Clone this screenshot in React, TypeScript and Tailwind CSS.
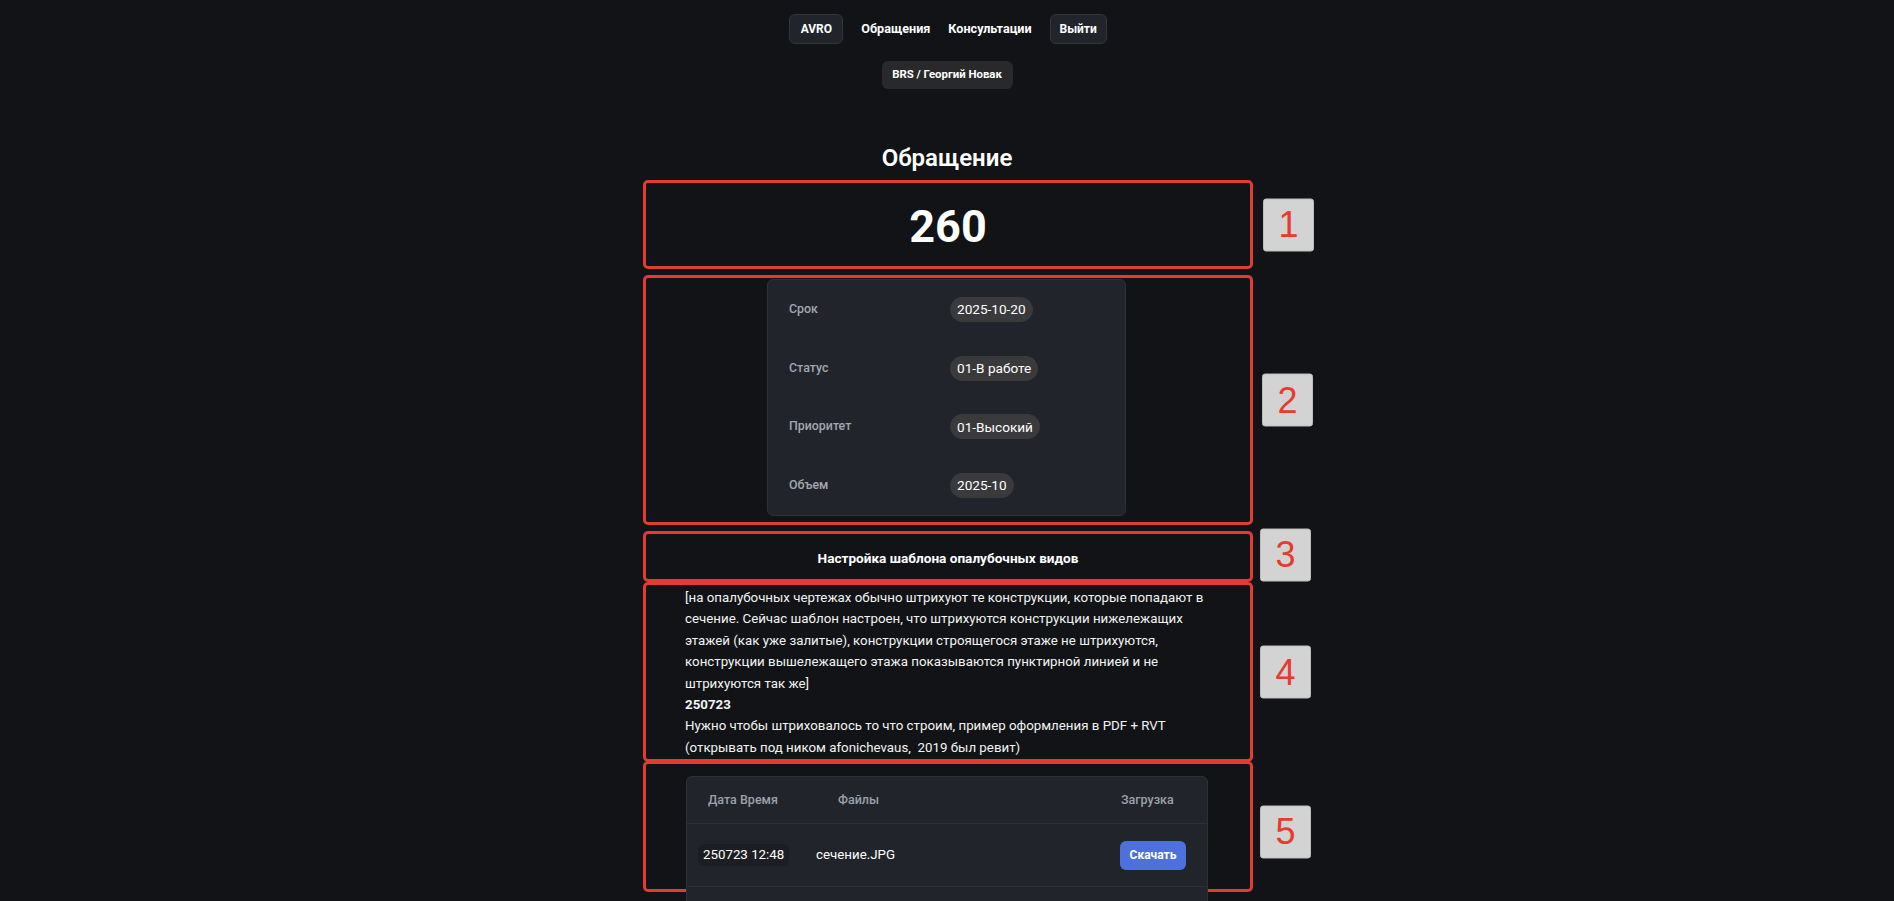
import React from "react";

function Badge({ n, offset = 0, left }: { n: string; offset?: number; left: string }) {
  return (
    <div
      className={`absolute ${left} top-1/2 w-[51px] h-[53px] bg-[#d3d3d4] border border-[#bdbdbd] rounded-[3px] flex items-center justify-center text-[36px] leading-none text-[#e53b30]`}
      style={{ transform: `translateY(calc(-50% + ${offset}px))`, fontFamily: '"Liberation Sans", Arial, sans-serif' }}
    >
      {n}
    </div>
  );
}

const rows = [
  ["Срок", "2025-10-20"],
  ["Статус", "01-В работе"],
  ["Приоритет", "01-Высокий"],
  ["Объем", "2025-10"],
];

export default function App() {
  return (
    <div
      className="min-h-screen bg-[#121317] text-white pb-10"
      style={{ fontFamily: 'Roboto, "Noto Sans", sans-serif' }}
    >
      <nav className="flex justify-center items-center gap-[18px] pt-[14px] pl-[2px]">
        <button className="h-[30px] w-[54px] bg-[#22242b] border border-[#34363c] rounded-[6px] text-[12px] font-bold text-white">
          AVRO
        </button>
        <a className="text-[12.6px] font-bold text-white">Обращения</a>
        <a className="text-[12.6px] font-bold text-white">Консультации</a>
        <button className="h-[30px] w-[57px] bg-[#22242b] border border-[#34363c] rounded-[6px] text-[12px] font-bold text-white">
          Выйти
        </button>
      </nav>
      <div className="flex justify-center mt-[17px]">
        <div className="h-[28px] w-[131px] justify-center bg-[#29292c] rounded-[6px] text-[11.4px] font-bold text-white flex items-center">
          BRS / Георгий Новак
        </div>
      </div>

      <h1 className="mt-[53px] text-center text-[24px] leading-[32px] font-semibold text-white">Обращение</h1>

      <div className="w-[610px] ml-[643px] mt-[6px]">
        {/* 1 */}
        <section className="relative h-[89px] border-[3px] border-[#e23b32] rounded-[5px] flex items-center justify-center">
          <div className="text-[45px] font-bold leading-none text-white pt-[4px]">260</div>
          <Badge n="1" left="left-[calc(100%+13px)]" />
        </section>

        {/* 2 */}
        <section className="relative h-[250px] mt-[6px] border-[3px] border-[#e23b32] rounded-[5px] pt-[1px]">
          <div className="w-[359px] ml-[121px] bg-[#22242b] border border-[#2e3037] rounded-[6px]">
            {rows.map(([k, v]) => (
              <div key={k} className="h-[58.7px] flex items-center pl-[21px]">
                <div className="w-[161px] text-[12.4px] font-medium text-[#a2a7b1]">{k}</div>
                <div className="h-[25px] px-[7px] rounded-full bg-[#3a3a3d] text-[13.6px] text-white flex items-center">{v}</div>
              </div>
            ))}
          </div>
          <Badge n="2" left="left-[calc(100%+12px)]" />
        </section>

        {/* 3 */}
        <section className="relative h-[51px] mt-[6px] border-[3px] border-[#e23b32] rounded-[5px] flex items-center justify-center">
          <div className="text-[13.6px] font-bold text-white pt-[3px]">Настройка шаблона опалубочных видов</div>
          <Badge n="3" offset={-2} left="left-[calc(100%+10px)]" />
        </section>

        {/* 4 */}
        <section className="relative h-[180px] border-[3px] border-[#e23b32] rounded-[5px] pl-[39px] pr-[38px] pt-[2px]">
          <div className="text-[13.3px] leading-[21.4px] text-[#f3f3f3]">
            <p>
              [на опалубочных чертежах обычно штрихуют те конструкции, которые попадают в сечение. Сейчас шаблон
              настроен, что штрихуются конструкции нижележащих этажей (как уже залитые), конструкции строящегося
              этаже не штрихуются, конструкции вышележащего этажа показываются пунктирной линией и не штрихуются так
              же]
            </p>
            <p className="font-bold">250723</p>
            <p>Нужно чтобы штриховалось то что строим, пример оформления в PDF + RVT</p>
            <p>(открывать под ником afonichevaus,&nbsp; 2019 был ревит)</p>
          </div>
          <Badge n="4" left="left-[calc(100%+10px)]" />
        </section>

        {/* 5 */}
        <section className="relative h-[131px] -mt-[1px] border-[3px] border-[#e23b32] rounded-[5px] pt-[12px]">
          <div className="ml-[40px] w-[522px] bg-[#22242b] border border-[#2e3037] rounded-t-[6px]">
            <div className="h-[46px] flex items-center text-[12.5px] font-medium text-[#9ba1ab]">
              <div className="w-[151px] pl-[21px]">Дата Время</div>
              <div className="w-[283px]">Файлы</div>
              <div>Загрузка</div>
            </div>
            <div className="h-[64px] flex items-center border-t border-b border-[#2e3037] text-[13.3px] text-white">
              <div className="w-[129px] pl-[11px]">
                <span className="inline-flex h-[22px] items-center px-[5px] rounded-[6px] bg-[#1d1e23]">250723 12:48</span>
              </div>
              <div className="w-[304px]">сечение.JPG</div>
              <div>
                <button className="h-[29px] w-[66px] rounded-[6px] bg-[#4e70dc] text-[12px] font-bold text-white">
                  Скачать
                </button>
              </div>
            </div>
            <div className="h-[40px]" />
          </div>
          <Badge n="5" offset={5} left="left-[calc(100%+10px)]" />
        </section>
      </div>
    </div>
  );
}
